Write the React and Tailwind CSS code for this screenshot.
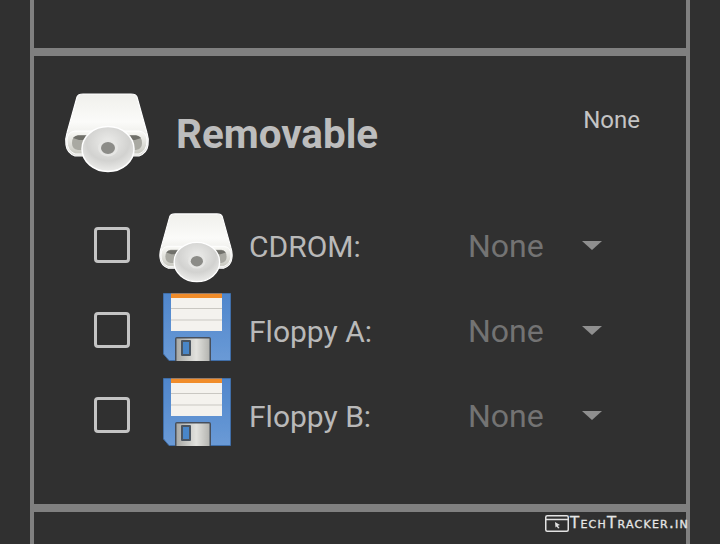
import React from "react";

function Drive({ className }) {
  return (
    <svg viewBox="0 0 84 80" className={className}>
      <defs>
        <linearGradient id="dbody" x1="0" y1="0" x2="0" y2="1">
          <stop offset="0" stopColor="#f0f0ec" />
          <stop offset="0.45" stopColor="#fbfbf9" />
          <stop offset="0.7" stopColor="#ecece8" />
          <stop offset="1" stopColor="#d8d8d2" />
        </linearGradient>
        <linearGradient id="dfront" x1="0" y1="0" x2="0" y2="1">
          <stop offset="0" stopColor="#fbfbf8" />
          <stop offset="1" stopColor="#c8c8c0" />
        </linearGradient>
        <radialGradient id="ddisc" cx="0.5" cy="0.35" r="0.75">
          <stop offset="0" stopColor="#ececea" />
          <stop offset="0.55" stopColor="#d2d2d0" />
          <stop offset="1" stopColor="#f6f6f4" />
        </radialGradient>
        <filter id="dsoft" x="-5%" y="-5%" width="110%" height="110%">
          <feGaussianBlur stdDeviation="0.55" />
        </filter>
      </defs>
      <g filter="url(#dsoft)">
        <path d="M12 4 Q13 1 18 1 L66 1 Q71 1 72 4 L82 40 Q84 46 83 52 Q82 60 74 63 L10 63 Q2 60 1 52 Q0 46 2 40 Z" fill="url(#dbody)" stroke="#ffffff" strokeWidth="1.2" />
        <path d="M2 48 Q2 39 10 38 L74 38 Q82 39 82 48 Q82 58 74 61 L68 61 L16 61 L10 61 Q2 58 2 48 Z" fill="url(#dfront)" stroke="#ffffff" strokeWidth="1" />
        <path d="M7 50 Q7 43 13 42 L71 42 Q77 43 77 50 Q77 56 71 57 L13 57 Q7 56 7 50 Z" fill="#a9a9a2" />
        <path d="M8 45 Q10 42.5 13 42.5 L71 42.5 Q74 42.5 76 45 L70 47 L14 47 Z" fill="#6f6f6a" />
        <ellipse cx="43" cy="56" rx="26" ry="22.5" fill="url(#ddisc)" stroke="#ffffff" strokeWidth="1.5" />
        <ellipse cx="43" cy="55" rx="10" ry="8.5" fill="#e6e6e4" />
        <ellipse cx="43" cy="55" rx="7" ry="6" fill="#8c8c88" />
      </g>
    </svg>
  );
}

function Floppy({ className }) {
  return (
    <svg viewBox="0 0 68 68" className={className}>
      <defs>
        <linearGradient id="fbody" x1="0" y1="0" x2="0" y2="1">
          <stop offset="0" stopColor="#4f86cc" />
          <stop offset="1" stopColor="#6a9ad6" />
        </linearGradient>
        <linearGradient id="fshut" x1="0" y1="0" x2="1" y2="0">
          <stop offset="0" stopColor="#a8a8a4" />
          <stop offset="0.6" stopColor="#e2e2de" />
          <stop offset="1" stopColor="#b4b4b0" />
        </linearGradient>
        <filter id="fsoft" x="-5%" y="-5%" width="110%" height="110%">
          <feGaussianBlur stdDeviation="0.4" />
        </filter>
      </defs>
      <g filter="url(#fsoft)">
        <path d="M0.5 0.5 H67.5 V67.5 H6 L0.5 61 Z" fill="url(#fbody)" stroke="#3f6ea8" strokeWidth="1" />
        <rect x="8" y="0.5" width="51" height="4.5" fill="#f08c2c" />
        <rect x="8" y="5" width="51" height="33" fill="#f4f2ee" />
        <path d="M8 15.5 H59 M8 27 H59" stroke="#c9c7c2" strokeWidth="1" />
        <path d="M12 68 V46 Q12 44 14 44 H46 Q48 44 48 46 V68 Z" fill="#46505c" />
        <path d="M13.5 68 V45.5 H46.5 V68 Z" fill="url(#fshut)" />
        <rect x="18" y="47" width="10" height="16" rx="1" fill="#4c5560" />
        <rect x="20" y="49" width="6" height="12" fill="#4a86c8" />
      </g>
    </svg>
  );
}

function Row({ icon, label }) {
  return (
    <div className="flex items-center h-[85px]">
      <div className="w-[36px] h-[36px] rounded-[4px] border-[3px] border-[#c4c4c4] shrink-0" />
      <div className="w-[120px] h-[85px] pl-[12px] flex items-center justify-center shrink-0">{icon}</div>
      <div className="w-[219px] mt-[4px] text-[30px] leading-none text-[#b9b9b9] -ml-[1px]">{label}</div>
      <div className="w-[114px] mt-[2px] text-[32px] leading-none text-[#737373]">None</div>
      <div className="mt-[2px] w-0 h-0 border-x-[10px] border-x-transparent border-t-[9px] border-t-[#8f8f8f]" />
    </div>
  );
}

export default function App() {
  return (
    <div className="relative w-[720px] h-[544px] overflow-hidden bg-[#303030]" style={{ fontFamily: "Roboto, sans-serif" }}>
      <div className="mx-[30px] h-full border-x-4 border-[#808080]">
        <div className="h-[48px]" />
        <div className="h-[464px] border-y-8 border-[#808080] flex flex-col">
          <div className="flex items-start pl-[30px] pr-[46px] pt-[37px]">
            <Drive className="w-[86px] h-[80px] shrink-0" />
            <div className="ml-[26px] mt-[20px] text-[40.4px] leading-[44px] font-bold text-[#bdbdbd]">Removable</div>
            <div className="ml-auto mt-[12px] text-[24px] leading-[30px] text-[#c4c4c4]">None</div>
          </div>
          <div className="flex flex-col pl-[60px] pt-[29px]">
            <Row icon={<Drive className="w-[76px] h-[70px] mt-[6px]" />} label="CDROM:" />
            <Row icon={<Floppy className="w-[68px] h-[68px] mb-[6px] ml-[2px]" />} label="Floppy A:" />
            <Row icon={<Floppy className="w-[68px] h-[68px] mb-[6px] ml-[2px]" />} label="Floppy B:" />
          </div>
        </div>
      </div>
      <div className="absolute left-[545px] top-[515px] flex items-center">
        <svg viewBox="0 0 24 17" className="w-[24px] h-[17px]">
          <rect x="0.75" y="0.75" width="22.5" height="15.5" rx="1.5" fill="none" stroke="#e2e2e2" strokeWidth="1.5" />
          <path d="M1 4.5 H23" stroke="#e2e2e2" strokeWidth="1.5" />
          <path d="M10 7 L15 10 L12.8 10.8 L14.5 13 L13 13.5 L11.8 11.5 L10.5 12.5 Z" fill="#e2e2e2" />
        </svg>
        <div className="ml-[1px] text-[15px] leading-none tracking-[1.25px] text-[#e6e6e6] [-webkit-text-stroke:0.3px_#e6e6e6]" style={{ fontFamily: "'DejaVu Sans', sans-serif", fontVariant: "small-caps" }}>
          TechTracker.in
        </div>
      </div>
    </div>
  );
}
